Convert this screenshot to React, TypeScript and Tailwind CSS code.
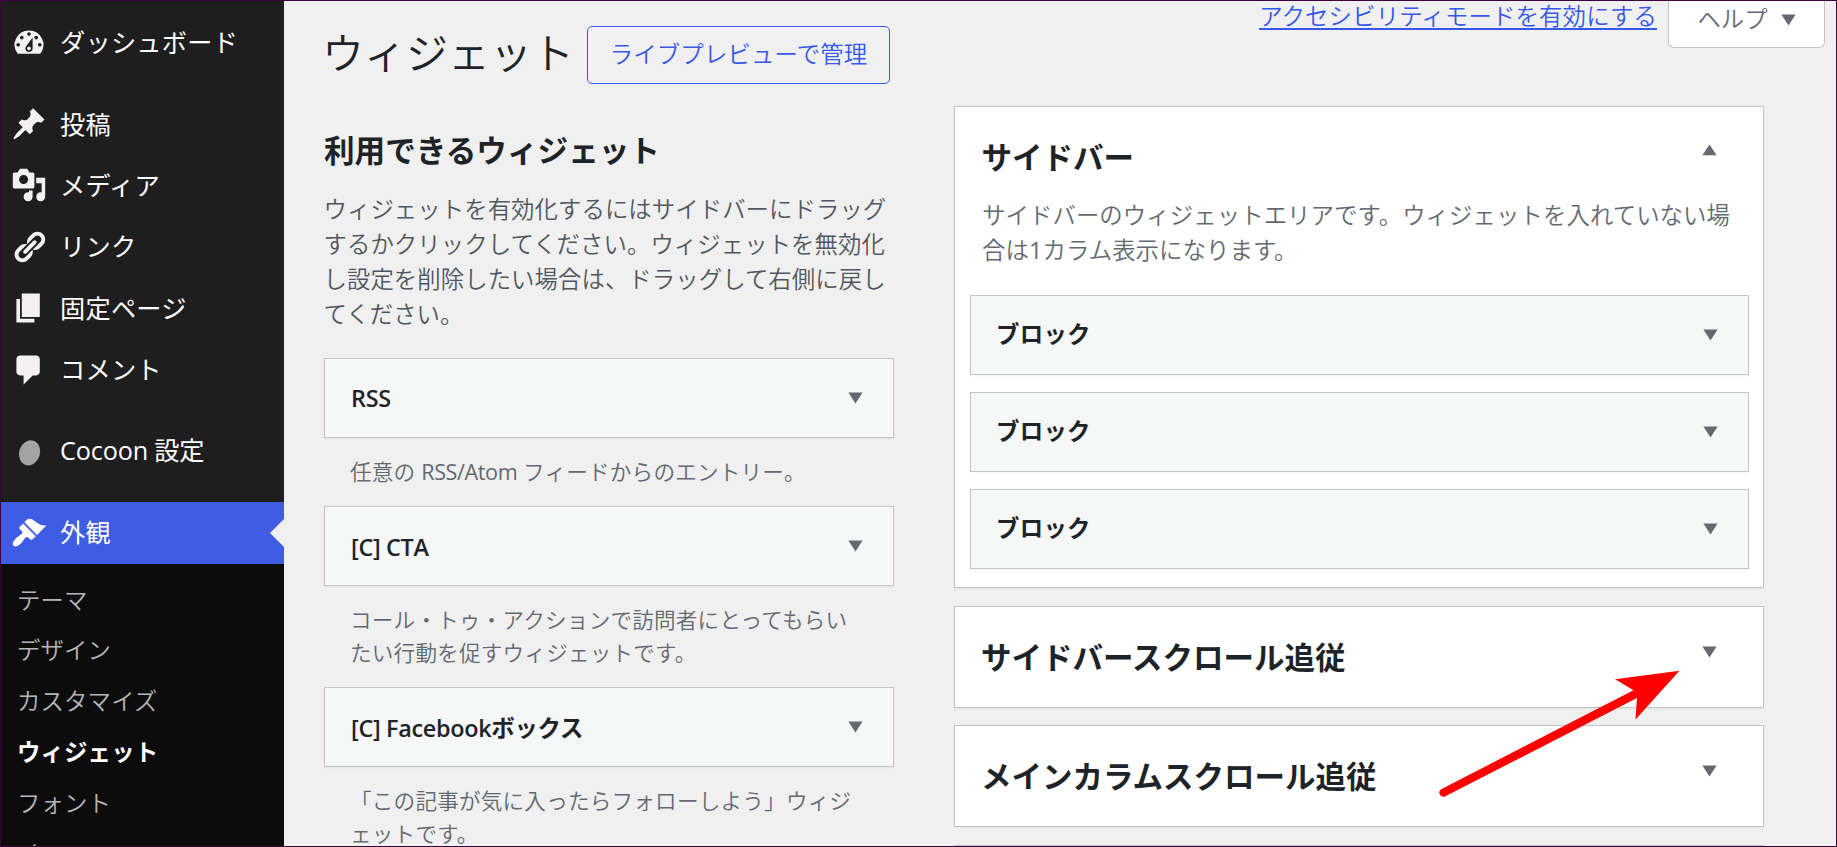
import React from 'react';

interface MenuItem {
  label: string;
  icon: string;
  gap?: boolean;
}

const ICONS: Record<string, string> = {
  dashboard:
    'M3.76 16h12.48A7.998 7.998 0 0 0 10 3a7.998 7.998 0 0 0-6.24 13zM10 4c.55 0 1 .45 1 1s-.45 1-1 1-1-.45-1-1 .45-1 1-1zM6 6c.55 0 1 .45 1 1s-.45 1-1 1-1-.45-1-1 .45-1 1-1zm8 0c.55 0 1 .45 1 1s-.45 1-1 1-1-.45-1-1 .45-1 1-1zm-5.37 5.55L12 7v6c0 1.1-.9 2-2 2s-2-.9-2-2c0-.57.24-1.08.63-1.45zM4 10c.55 0 1 .45 1 1s-.45 1-1 1-1-.45-1-1 .45-1 1-1zm12 0c.55 0 1 .45 1 1s-.45 1-1 1-1-.45-1-1 .45-1 1-1zm-5 3c0-.55-.45-1-1-1s-1 .45-1 1 .45 1 1 1 1-.45 1-1z',
  post:
    'M10.44 3.02l1.82-1.82 6.36 6.35-1.83 1.82c-1.05-.68-2.48-.57-3.41.36l-.75.75c-.92.93-1.04 2.35-.35 3.41l-1.83 1.82-2.41-2.41-2.8 2.79c-.42.42-3.38 2.71-3.8 2.29s1.86-3.39 2.28-3.81l2.79-2.79L4.1 9.36l1.83-1.82c1.05.69 2.48.57 3.4-.36l.75-.75c.93-.92 1.05-2.35.36-3.41z',
  media:
    'M13 11V4c0-.55-.45-1-1-1h-1.67L9 1H5L3.67 3H2c-.55 0-1 .45-1 1v7c0 .55.45 1 1 1h10c.55 0 1-.45 1-1zM7 4.5c1.38 0 2.5 1.12 2.5 2.5S8.38 9.5 7 9.5 4.5 8.38 4.5 7 5.62 4.5 7 4.5zM14 6h5v10.5c0 1.38-1.12 2.5-2.5 2.5S14 17.88 14 16.5s1.12-2.5 2.5-2.5c.17 0 .34.02.5.05V9h-3V6zm-4 8.05V13h2v3.5c0 1.38-1.12 2.5-2.5 2.5S7 17.88 7 16.5 8.12 14 9.5 14c.17 0 .34.02.5.05z',
  link:
    'M17.74 2.76c1.68 1.69 1.68 4.41 0 6.1l-1.53 1.52c-1.12 1.12-2.7 1.47-4.14 1.09l2.62-2.61.76-.77.76-.76c.84-.84.84-2.2 0-3.04-.84-.85-2.2-.85-3.04 0l-.77.76-3.38 3.38c-.37-1.44-.02-3.02 1.1-4.14l1.52-1.53c1.69-1.68 4.42-1.68 6.1 0zM8.59 13.43l5.34-5.34c.42-.42.42-1.1 0-1.52-.44-.43-1.13-.39-1.53 0l-5.33 5.34c-.42.42-.42 1.1 0 1.52.44.43 1.13.39 1.52 0zm-.76 2.29l4.14-4.15c.38 1.44.03 3.02-1.09 4.14l-1.52 1.53c-1.69 1.68-4.41 1.68-6.1 0-1.68-1.68-1.68-4.42 0-6.1l1.53-1.52c1.12-1.12 2.7-1.47 4.14-1.1l-4.14 4.15c-.85.84-.85 2.2 0 3.05.84.84 2.2.84 3.04 0z',
  page: 'M6 15V2h10v13H6zm-1 1h8v2H3V5h2v11z',
  comment: 'M5 2h9c1.1 0 2 .9 2 2v7c0 1.1-.9 2-2 2h-2l-5 5v-5H5c-1.1 0-2-.9-2-2V4c0-1.1.9-2 2-2z',
  appearance:
    'M14.48 11.06L7.41 3.99l1.5-1.5c.5-.56 2.3-.47 3.51.32 1.21.8 1.43 1.28 2.91 2.1 1.18.64 2.45 1.26 4.45.85zm-.71.71L6.7 4.7 4.93 6.47c-.39.39-.39 1.02 0 1.41l1.06 1.06c.39.39.39 1.03 0 1.42-.6.6-1.43 1.11-2.21 1.69-.35.26-.7.53-1.01.84C1.43 14.23.4 16.08 1.4 17.07c.99 1 2.84-.03 4.18-1.36.31-.31.58-.66.85-1.02.57-.78 1.08-1.61 1.69-2.21.39-.39 1.02-.39 1.41 0l1.06 1.06c.39.39 1.02.39 1.41 0z',
};

const menu: MenuItem[] = [
  { label: 'ダッシュボード', icon: 'dashboard', gap: true },
  { label: '投稿', icon: 'post' },
  { label: 'メディア', icon: 'media' },
  { label: 'リンク', icon: 'link' },
  { label: '固定ページ', icon: 'page' },
  { label: 'コメント', icon: 'comment', gap: true },
  { label: 'Cocoon 設定', icon: 'cocoon', gap: true },
];

const submenu = ['テーマ', 'デザイン', 'カスタマイズ', 'ウィジェット', 'フォント', 'メニュー'];

const widgets: { title: string; lines: React.ReactNode[] }[] = [
  {
    title: 'RSS',
    lines: [
      <>
        任意の <span className="font-normal tracking-[-0.4px]">RSS/Atom</span> フィードからのエントリー。
      </>,
    ],
  },
  { title: '[C] CTA', lines: ['コール・トゥ・アクションで訪問者にとってもらい', 'たい行動を促すウィジェットです。'] },
  { title: '[C] Facebookボックス', lines: ['「この記事が気に入ったらフォローしよう」ウィジ', 'ェットです。'] },
];

const MenuIcon = ({ name }: { name: string }) => (
  <svg viewBox="0 0 20 20" className="w-9 h-9 shrink-0" fill="currentColor">
    {name === 'cocoon' ? (
      <ellipse cx="10.3" cy="11" rx="5.8" ry="7.1" fill="#a3a3a3" transform="rotate(18 10.3 11)" />
    ) : (
      <path d={ICONS[name]} />
    )}
  </svg>
);

const Caret = ({ up = false }: { up?: boolean }) => (
  <svg viewBox="0 0 15 12" className="w-[15px] h-3 shrink-0" fill="#646970">
    <path d={up ? 'M7.5 0.5L14.6 11.3H0.4z' : 'M0.4 0.5H14.6L7.5 11.5z'} />
  </svg>
);

const WidgetBox = ({ title, latin = false }: { title: string; latin?: boolean }) => (
  <div className="h-[80px] bg-[#f6f7f7] border border-[#c3c4c7] shadow-[0_1px_2px_rgba(0,0,0,0.05)] flex items-center justify-between pl-[25px] pr-[30px] font-semibold text-[#1d2327]">
    <span className={latin ? 'pl-px pt-[2px] tracking-[-0.3px]' : 'tracking-[0.3px]'}>{title}</span>
    <Caret />
  </div>
);

const AreaPanel = ({ title }: { title: string }) => (
  <section className="h-[102px] shrink-0 bg-white border border-[#c3c4c7] shadow-[0_1px_2px_rgba(0,0,0,0.05)] flex justify-between pl-[26px] pr-[46px]">
    <h2 className="pt-[28px] text-[30.5px] leading-[44px] font-bold text-[#1d2327]">{title}</h2>
    <div className="pt-[39px]">
      <Caret />
    </div>
  </section>
);

const Sidebar = () => (
  <nav className="w-[283px] shrink-0 bg-[#1e1e1e] pt-[11px] flex flex-col text-[25.2px] text-[#f3f1f1]">
    {menu.map((item) => (
      <div key={item.label} className={item.gap ? 'mb-[20px]' : ''}>
        <div className="h-[61.4px] flex items-center pl-[9.5px]">
          <MenuIcon name={item.icon} />
          <span className={`text-white pl-[13.5px] ${item.icon === 'cocoon' ? 'tracking-[-0.15px]' : 'tracking-[0.25px]'}`}>
            {item.label}
          </span>
        </div>
      </div>
    ))}
    <div className="relative h-[62px] shrink-0 flex items-center pl-[9.5px] bg-[#3f5ce4] text-white">
      <MenuIcon name="appearance" />
      <span className="pl-[13.5px] tracking-[0.25px]">外観</span>
      <span className="absolute right-0 top-[17px] border-y-[14px] border-y-transparent border-r-[14px] border-r-[#f0f0f0]" />
    </div>
    <ul className="flex-1 bg-[#0c0c0c] pt-[11px] pl-[16px] text-[23.4px] tracking-[0.15px] text-[#b6b6b6]">
      {submenu.map((label) => (
        <li
          key={label}
          className={`h-[50.76px] flex items-center ${label === 'ウィジェット' ? 'font-bold text-white' : 'font-[350]'}`}
        >
          {label}
        </li>
      ))}
    </ul>
  </nav>
);

export default function App() {
  return (
    <div className="relative w-[1837px] h-[847px] overflow-hidden border border-[#3f0040] bg-[#f0f0f0] flex font-['Open_Sans','Noto_Sans_CJK_JP',sans-serif] text-[23.4px] leading-[35.1px]">
      <Sidebar />

      <main className="flex-1 flex pl-[40px]">
        {/* Available widgets */}
        <div className="w-[570px] shrink-0">
          <div className="flex items-start pt-[25px]">
            <h1 className="w-[263px] shrink-0 -ml-0.5 mr-0.5 mt-[-1px] text-[42px] leading-[56px] font-[350] text-[#1d2327]">ウィジェット</h1>
            <button className="h-[58px] w-[303px] border border-[#3858e9] rounded-[5px] text-[#3858e9] font-[350] tracking-[0.15px] pb-px">
              ライブプレビューで管理
            </button>
          </div>
          <h2 className="mt-[44px] text-[30.6px] leading-[44px] font-bold text-[#1d2327]">利用できるウィジェット</h2>
          <p className="mt-[20px] ml-[-0.5px] h-[141px] font-[350] tracking-[0.06px] text-[#50575e] whitespace-nowrap">
            ウィジェットを有効化するにはサイドバーにドラッグ
            <br />
            するかクリックしてください。ウィジェットを無効化
            <br />
            し設定を削除したい場合は、ドラッグして右側に戻し
            <br />
            てください。
          </p>
          <div className="mt-[25px]">
            {widgets.map((w) => (
              <div key={w.title}>
                <WidgetBox title={w.title} latin />
                <div className="pl-[26px] pt-[18px] pb-[18px] text-[21.6px] leading-[32.4px] font-[350] tracking-[0.2px] text-[#646970] whitespace-nowrap">
                  {w.lines.map((line, i) => (
                    <div key={i}>{line}</div>
                  ))}
                </div>
              </div>
            ))}
          </div>
        </div>

        {/* Widget areas */}
        <div className="flex-1 flex flex-col pl-[60px]">
          <div className="h-[105px] shrink-0 flex items-start justify-end pr-[11px] font-[350]">
            <a className="mr-[11px] mt-[-2px] tracking-[0.15px] text-[#3858e9] underline decoration-2 underline-offset-[3px]">アクセシビリティモードを有効にする</a>
            <button className="h-[47px] w-[157px] bg-white border border-t-0 border-[#c3c4c7] rounded-b-[6px] flex items-start justify-center gap-[13px] text-[#646970]">
              <span className="pt-px">ヘルプ</span>
              <span className="pt-[13px]">
                <Caret />
              </span>
            </button>
          </div>
          <div className="w-[810px] flex flex-col gap-[17.5px]">
            <section className="h-[482px] shrink-0 bg-white border border-[#c3c4c7] shadow-[0_1px_2px_rgba(0,0,0,0.05)] pl-[15px] pr-[14px]">
              <div className="flex justify-between pl-[11.5px] pr-[32px]">
                <h2 className="pt-[27.5px] text-[30.5px] leading-[44px] font-bold text-[#1d2327]">サイドバー</h2>
                <div className="pt-[37px]">
                  <Caret up />
                </div>
              </div>
              <p className="mt-[19.5px] pl-[12px] h-[97px] font-[350] tracking-[0.08px] text-[#646970] whitespace-nowrap">
                サイドバーのウィジェットエリアです。ウィジェットを入れていない場
                <br />
                合は<span className="font-normal">1</span>カラム表示になります。
              </p>
              <div className="flex flex-col gap-[17px]">
                <WidgetBox title="ブロック" />
                <WidgetBox title="ブロック" />
                <WidgetBox title="ブロック" />
              </div>
            </section>
            <AreaPanel title="サイドバースクロール追従" />
            <AreaPanel title="メインカラムスクロール追従" />
            <AreaPanel title="" />
          </div>
        </div>
      </main>

      {/* Pointer arrow */}
      <svg viewBox="0 0 250 140" className="absolute left-[1434px] top-[664px] w-[250px] h-[140px]" fill="#ff0000">
        <path d="M244.5 5.7L180 14.3L198.5 25.2L6.6 124A4 4 0 0 0 10.4 131.2L202 33L200.5 54.5z" />
      </svg>
    </div>
  );
}
